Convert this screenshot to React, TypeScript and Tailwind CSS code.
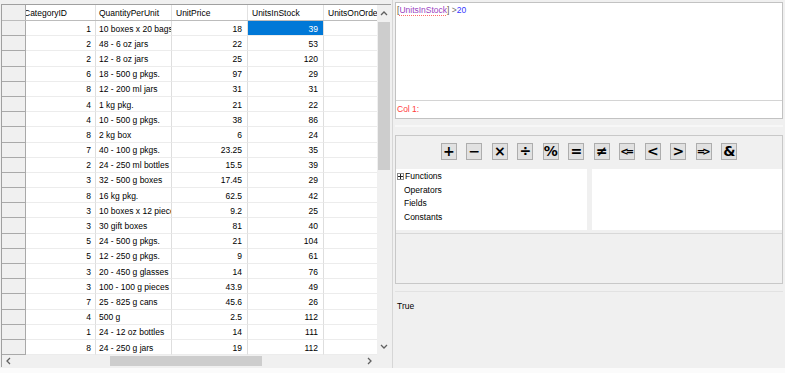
import React from "react";

type Row = [number, string, string, string];

const rows: Row[] = [
  [1, "10 boxes x 20 bags", "18", "39"],
  [2, "48 - 6 oz jars", "22", "53"],
  [2, "12 - 8 oz jars", "25", "120"],
  [6, "18 - 500 g pkgs.", "97", "29"],
  [8, "12 - 200 ml jars", "31", "31"],
  [4, "1 kg pkg.", "21", "22"],
  [4, "10 - 500 g pkgs.", "38", "86"],
  [8, "2 kg box", "6", "24"],
  [7, "40 - 100 g pkgs.", "23.25", "35"],
  [2, "24 - 250 ml bottles", "15.5", "39"],
  [3, "32 - 500 g boxes", "17.45", "29"],
  [8, "16 kg pkg.", "62.5", "42"],
  [3, "10 boxes x 12 pieces", "9.2", "25"],
  [3, "30 gift boxes", "81", "40"],
  [5, "24 - 500 g pkgs.", "21", "104"],
  [5, "12 - 250 g pkgs.", "9", "61"],
  [3, "20 - 450 g glasses", "14", "76"],
  [3, "100 - 100 g pieces", "43.9", "49"],
  [7, "25 - 825 g cans", "45.6", "26"],
  [4, "500 g", "2.5", "112"],
  [1, "24 - 12 oz bottles", "14", "111"],
  [8, "24 - 250 g  jars", "19", "112"],
];

const ops = ["+", "−", "×", "÷", "%", "=", "≠", "<=", "<", ">", "=>", "&"];

function Chevron({ dir }: { dir: "up" | "down" | "left" | "right" }) {
  const d = {
    up: "M1 5 L4 2 L7 5",
    down: "M1 2 L4 5 L7 2",
    left: "M5 1 L2 4 L5 7",
    right: "M2 1 L5 4 L2 7",
  }[dir];
  return (
    <svg width="8" height="8" viewBox="0 0 8 8">
      <path d={d} fill="none" stroke="#606060" strokeWidth="1.3" />
    </svg>
  );
}

function Grid() {
  return (
    <div className="flex h-[351px] border-l border-t border-[#a0a0a0]">
      <div className="w-[375px] shrink-0 overflow-hidden bg-white">
        {/* header */}
        <div className="flex h-[16px] border-b border-[#bcbcbc]">
          <div className="w-[24px] shrink-0 border-r border-[#a9a9a9] bg-[#f0f0f0]" />
          <div className="flex w-[70px] shrink-0 items-center overflow-hidden border-r border-[#e2e2e2] pt-[2px]">
            <span className="-ml-[2px] whitespace-nowrap">CategoryID</span>
          </div>
          <div className="flex w-[76px] shrink-0 items-center overflow-hidden border-r border-[#e2e2e2] pl-[3px] pt-[2px]">QuantityPerUnit</div>
          <div className="flex w-[76px] shrink-0 items-center overflow-hidden border-r border-[#e2e2e2] pl-[4px] pt-[2px]">UnitPrice</div>
          <div className="flex w-[76px] shrink-0 items-center overflow-hidden border-r border-[#e2e2e2] pl-[4px] pt-[2px]">UnitsInStock</div>
          <div className="flex w-[76px] shrink-0 items-center overflow-hidden whitespace-nowrap pl-[4px] pt-[2px]">UnitsOnOrder</div>
        </div>
        {rows.map((r, i) => (
          <div key={i} className="flex h-[15.2px]">
            <div className="w-[24px] shrink-0 border-b border-r border-[#a9a9a9] bg-[#f0f0f0]" />
            <div className="flex w-[70px] shrink-0 items-center justify-end border-b border-r border-b-[#ececec] border-r-[#dedede] pr-[4px] pt-[2px]">{r[0]}</div>
            <div className="flex w-[76px] shrink-0 items-center overflow-hidden whitespace-nowrap border-b border-r border-b-[#ececec] border-r-[#dedede] pl-[3px] pt-[2px]">{r[1]}</div>
            <div className="flex w-[76px] shrink-0 items-center justify-end border-b border-r border-b-[#ececec] border-r-[#dedede] pr-[5px] pt-[2px]">{r[2]}</div>
            <div
              className={
                i === 0
                  ? "flex w-[76px] shrink-0 items-center justify-end border-b border-r border-b-[#ececec] border-r-[#dedede] bg-[#0078d7] pr-[5px] pt-[2px] text-white"
                  : "flex w-[76px] shrink-0 items-center justify-end border-b border-r border-b-[#ececec] border-r-[#dedede] pr-[5px] pt-[2px]"
              }
            >
              {r[3]}
            </div>
            <div className="w-[76px] shrink-0 border-b border-[#ececec]" />
          </div>
        ))}
      </div>
      {/* vertical scrollbar */}
      <div className="flex w-[14px] shrink-0 flex-col bg-[#f0f0f0]">
        <div className="flex h-[17px] items-center justify-center">
          <Chevron dir="up" />
        </div>
        <div className="mx-[1px] h-[148px] bg-[#cdcdcd]" />
        <div className="flex-1" />
        <div className="flex h-[17px] items-center justify-center">
          <Chevron dir="down" />
        </div>
      </div>
    </div>
  );
}

function HScroll() {
  return (
    <div className="flex h-[12px] border-l border-[#a0a0a0] bg-[#f0f0f0]">
      <div className="flex w-[14px] items-center justify-center">
        <Chevron dir="left" />
      </div>
      <div className="w-[94px]" />
      <div className="my-[1px] w-[152px] bg-[#cdcdcd]" />
      <div className="flex-1" />
      <div className="flex w-[14px] items-center justify-center">
        <Chevron dir="right" />
      </div>
      <div className="w-[14px] bg-[#f0f0f0]" />
    </div>
  );
}

export default function App() {
  return (
    <div className="flex h-[373px] w-[785px] flex-col overflow-hidden bg-[#f0f0f0] font-['Liberation_Sans',Arial,sans-serif] text-[8.5px] leading-[11px] text-black">
      <div className="flex h-[368px]">
        {/* left: data grid */}
        <div className="flex w-[392px] shrink-0 flex-col pl-px pt-[4px]">
          <div className="w-[390px]">
            <Grid />
            <HScroll />
          </div>
        </div>

        {/* right: expression editor */}
        <div className="flex flex-1 flex-col border-l border-[#d6d6d6] pl-[2px] pr-[2px]">
          <div className="mt-[2px] flex h-[117px] flex-col border border-[#c2c2c2] bg-white">
            <div className="flex-1 px-[1px] pt-[1px] leading-[12px]">
              <span className="text-[#6b5a3a]">[</span>
              <span className="text-[#9b3fc2] underline decoration-[#ff6a6a] decoration-dotted decoration-1 underline-offset-2">UnitsInStock</span>
              <span className="text-[#6b5a3a]">]</span>
              <span className="text-[#707070]"> &gt;</span>
              <span className="text-[#3535ff]">20</span>
            </div>
            <div className="flex h-[18px] items-center border-t border-[#d4d4d4] px-[1px] text-[#ff3b3b]">Col 1:</div>
          </div>

          <div className="flex h-[16px] flex-col">
            <div className="mt-[6px] h-[2px] bg-[#f7f7f7]" />
          </div>

          <div className="flex h-[149px] flex-col border border-[#c8c8c8]">
            <div className="flex justify-center gap-[9.5px] pt-[7px]">
              {ops.map((o) => (
                <div
                  key={o}
                  className={
                    o.length > 1
                      ? "flex h-[17px] w-[16px] items-center justify-center border border-[#adadad] bg-[#e1e1e1] font-['DejaVu_Sans',sans-serif] text-[10px] font-bold tracking-[-3px]"
                      : "flex h-[17px] w-[16px] items-center justify-center border border-[#adadad] bg-[#e1e1e1] font-['DejaVu_Sans',sans-serif] text-[14px] font-bold"
                  }
                >
                  <span className={o.length > 1 ? "-ml-[3px]" : ""}>{o}</span>
                </div>
              ))}
            </div>
            <div className="mt-[9px] flex h-[61px] gap-[5px]">
              <div className="flex w-[191px] flex-col bg-white pl-px pt-[1px]">
                <div className="flex h-[13.5px] items-center gap-[1px]">
                  <span className="flex h-[7px] w-[7px] items-center justify-center border border-[#8c8c8c]">
                    <svg width="5" height="5" viewBox="0 0 5 5">
                      <path d="M0 2.5 H5 M2.5 0 V5" stroke="#202020" strokeWidth="1" />
                    </svg>
                  </span>
                  <span>Functions</span>
                </div>
                <div className="flex h-[13.5px] items-center pl-[7px]">Operators</div>
                <div className="flex h-[13.5px] items-center pl-[7px]">Fields</div>
                <div className="flex h-[13.5px] items-center pl-[7px]">Constants</div>
              </div>
              <div className="flex-1 bg-white" />
            </div>
            <div className="mt-[3px] flex-1 border-t border-[#d8d8d8]" />
          </div>

          <div className="mt-[7px] flex-1 border-t border-[#e2e2e2] pl-[2px] pt-[9px]">True</div>
        </div>
      </div>
      <div className="flex-1 bg-[#fbfbfb]" />
    </div>
  );
}
